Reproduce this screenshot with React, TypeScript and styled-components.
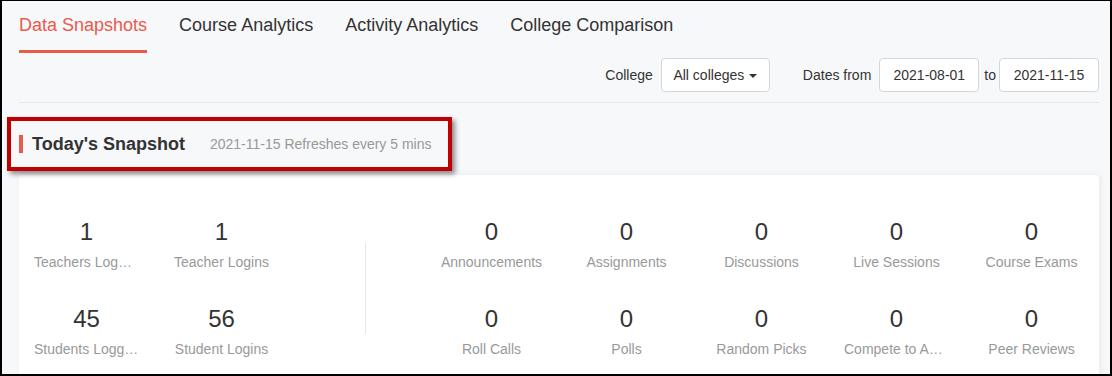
import styled, { createGlobalStyle } from "styled-components";

const GlobalStyle = createGlobalStyle`
  html, body {
    margin: 0;
    padding: 0;
    background: #f7f8fa;
  }
  body {
    font-family: "Liberation Sans", Arial, sans-serif;
    color: #333;
  }
`;

const Frame = styled.div`
  box-sizing: border-box;
  width: 1112px;
  height: 376px;
  overflow: hidden;
  border: 2px solid #000;
  border-top-width: 1px;
  background: #f7f8fa;
`;

const Content = styled.div`
  margin: 0 11px 0 17px;
`;

const TabBar = styled.nav`
  display: flex;
  gap: 32px;
  height: 52px;
`;

const Tab = styled.a<{ $active?: boolean }>`
  display: block;
  box-sizing: content-box;
  padding-top: 12px;
  height: 37px;
  line-height: 24px;
  font-size: 18px;
  color: ${({ $active }) => ($active ? "#ea5a4b" : "#333")};
  border-bottom: 3px solid ${({ $active }) => ($active ? "#ea5a4b" : "transparent")};
  cursor: pointer;
`;

const FilterRow = styled.div`
  display: flex;
  justify-content: flex-end;
  align-items: center;
  margin-top: 5px;
  padding-bottom: 10px;
  border-bottom: 1px solid #e6e7ea;
  font-size: 14px;
  color: #333;
`;

const FilterLabel = styled.span<{ $gapLeft?: number; $gapRight?: number }>`
  margin-left: ${({ $gapLeft }) => $gapLeft ?? 0}px;
  margin-right: ${({ $gapRight }) => $gapRight ?? 8}px;
`;

const Control = styled.div<{ $width: number }>`
  box-sizing: border-box;
  width: ${({ $width }) => $width}px;
  height: 34px;
  display: flex;
  align-items: center;
  justify-content: center;
  background: #fff;
  border: 1px solid #d4d6da;
  border-radius: 4px;
  font-size: 14px;
  color: #333;
`;

const Caret = styled.span`
  display: inline-block;
  margin-left: 5px;
  width: 0;
  height: 0;
  border-left: 4px solid transparent;
  border-right: 4px solid transparent;
  border-top: 4px solid #333;
  transform: translateY(1px);
`;

const SnapshotHeader = styled.div`
  position: relative;
  display: flex;
  align-items: center;
  margin-top: 32px;
  height: 18px;
  margin-bottom: 22px;
`;

const AccentBar = styled.span`
  width: 4px;
  height: 18px;
  background: #ea5a4b;
  margin-right: 9px;
`;

const HeaderTitle = styled.h2`
  margin: 0;
  font-size: 18px;
  font-weight: bold;
  color: #333;
  line-height: 18px;
`;

const HeaderMeta = styled.span`
  margin-left: 25px;
  font-size: 14px;
  color: #999;
`;

const Highlight = styled.div`
  position: absolute;
  left: -12px;
  top: -18px;
  width: 445px;
  height: 54px;
  box-sizing: border-box;
  border: 4px solid #c00000;
  box-shadow: 3px 3px 5px rgba(0, 0, 0, 0.45);
  pointer-events: none;
`;

const Card = styled.section`
  background: #fff;
  border-radius: 4px 4px 0 0;
  box-shadow: 2px 0 6px rgba(0, 0, 0, 0.06);
  padding-top: 43px;
  height: 260px;
  display: flex;
`;

const LeftGroup = styled.div`
  width: 346px;
  display: grid;
  grid-template-columns: repeat(2, 135px);
  row-gap: 33px;
  align-content: start;
`;

const Divider = styled.div`
  width: 1px;
  height: 91px;
  margin-top: 25px;
  background: #e6e7ea;
`;

const RightGroup = styled.div`
  margin-left: 58px;
  display: grid;
  grid-template-columns: repeat(5, 135px);
  row-gap: 33px;
  align-content: start;
`;

const Stat = styled.div`
  text-align: center;
  padding: 0 15px;
  min-width: 0;
`;

const StatValue = styled.div`
  font-size: 24px;
  line-height: 28px;
  color: #333;
`;

const StatLabel = styled.div`
  margin-top: 6px;
  font-size: 14px;
  line-height: 20px;
  color: #999;
  white-space: nowrap;
  overflow: hidden;
  text-overflow: ellipsis;
`;

const tabs = ["Data Snapshots", "Course Analytics", "Activity Analytics", "College Comparison"];

const leftStats = [
  { value: 1, label: "Teachers Logged In" },
  { value: 1, label: "Teacher Logins" },
  { value: 45, label: "Students Logged In" },
  { value: 56, label: "Student Logins" },
];

const rightStats = [
  { value: 0, label: "Announcements" },
  { value: 0, label: "Assignments" },
  { value: 0, label: "Discussions" },
  { value: 0, label: "Live Sessions" },
  { value: 0, label: "Course Exams" },
  { value: 0, label: "Roll Calls" },
  { value: 0, label: "Polls" },
  { value: 0, label: "Random Picks" },
  { value: 0, label: "Compete to Answer" },
  { value: 0, label: "Peer Reviews" },
];

export default function App() {
  return (
    <>
      <GlobalStyle />
      <Frame>
        <Content>
          <TabBar>
            {tabs.map((t, i) => (
              <Tab key={t} $active={i === 0}>
                {t}
              </Tab>
            ))}
          </TabBar>
          <FilterRow>
            <FilterLabel>College</FilterLabel>
            <Control $width={109}>
              All colleges
              <Caret />
            </Control>
            <FilterLabel $gapLeft={33}>Dates from</FilterLabel>
            <Control $width={100}>2021-08-01</Control>
            <FilterLabel $gapLeft={5} $gapRight={3}>
              to
            </FilterLabel>
            <Control $width={100}>2021-11-15</Control>
          </FilterRow>
          <SnapshotHeader>
            <AccentBar />
            <HeaderTitle>Today's Snapshot</HeaderTitle>
            <HeaderMeta>2021-11-15 Refreshes every 5 mins</HeaderMeta>
            <Highlight />
          </SnapshotHeader>
          <Card>
            <LeftGroup>
              {leftStats.map((s) => (
                <Stat key={s.label}>
                  <StatValue>{s.value}</StatValue>
                  <StatLabel>{s.label}</StatLabel>
                </Stat>
              ))}
            </LeftGroup>
            <Divider />
            <RightGroup>
              {rightStats.map((s) => (
                <Stat key={s.label}>
                  <StatValue>{s.value}</StatValue>
                  <StatLabel>{s.label}</StatLabel>
                </Stat>
              ))}
            </RightGroup>
          </Card>
        </Content>
      </Frame>
    </>
  );
}
